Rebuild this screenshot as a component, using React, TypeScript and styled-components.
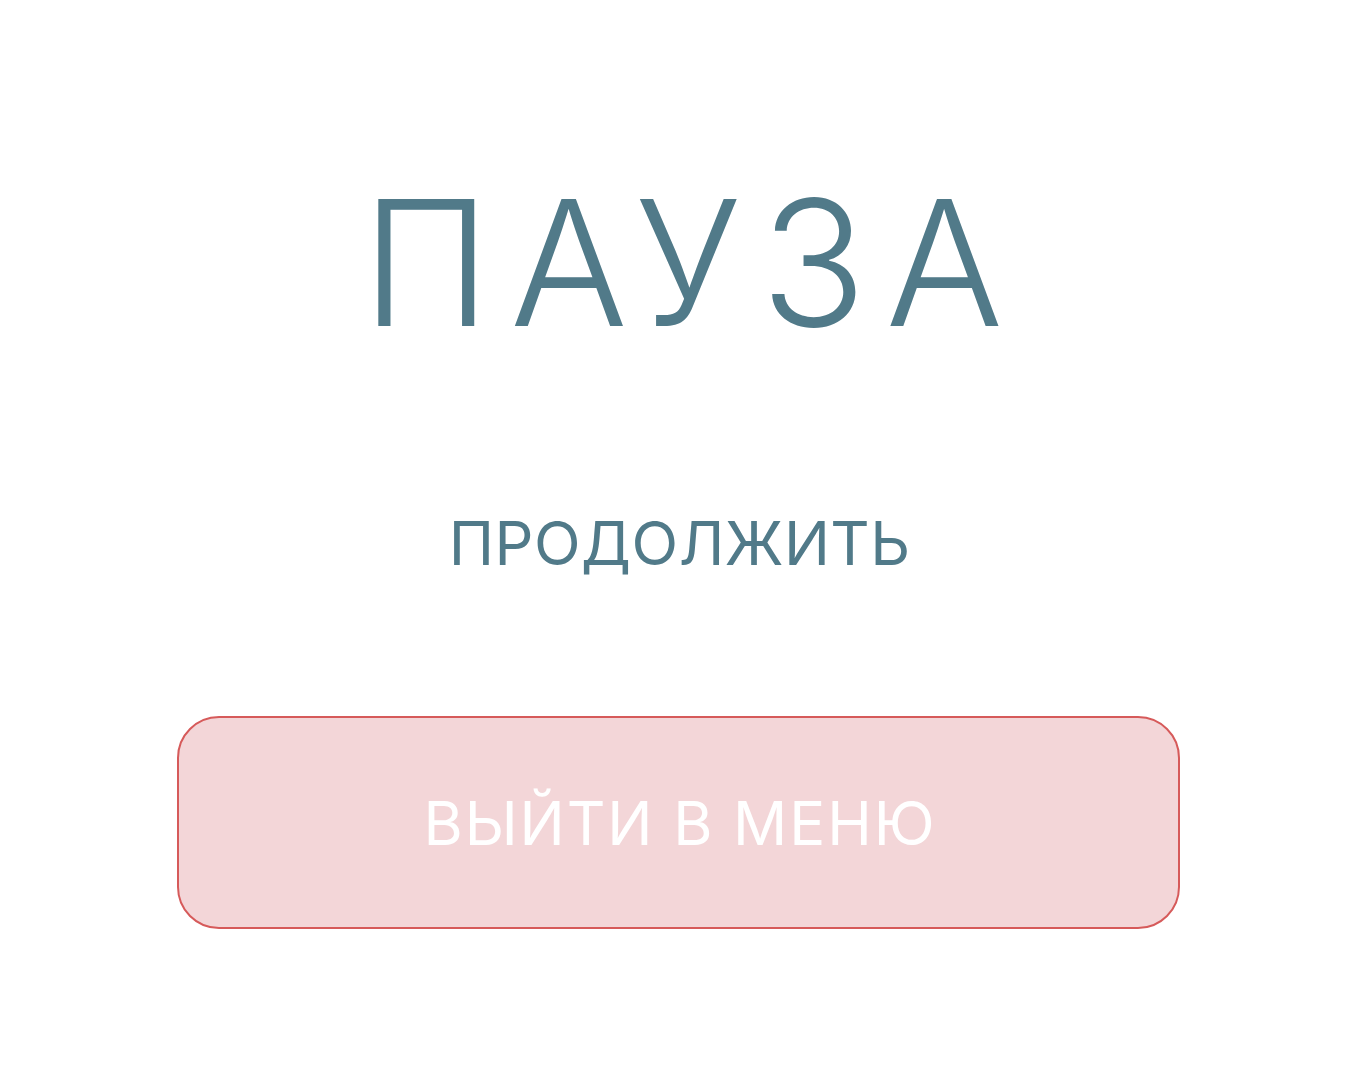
import React from 'react';
import styled, { createGlobalStyle } from 'styled-components';

const GlobalStyle = createGlobalStyle`
  html, body {
    margin: 0;
    padding: 0;
    background: #ffffff;
  }
  body {
    font-family: Inter, "Noto Sans", sans-serif;
  }
`;

const Screen = styled.div`
  display: flex;
  flex-direction: column;
  align-items: center;
  min-height: 1091px;
  padding-top: 175px;
  box-sizing: border-box;
`;

const Title = styled.h1`
  margin: 0;
  padding-left: 25px;
  font-size: 175px;
  font-weight: 300;
  line-height: 1;
  letter-spacing: 19px;
  color: #517a89;
`;

const ResumeButton = styled.button`
  margin-top: 163px;
  border: none;
  background: none;
  padding: 0;
  font-family: inherit;
  font-size: 61px;
  font-weight: 400;
  line-height: 1;
  letter-spacing: 0.5px;
  color: #517a89;
  cursor: pointer;
`;

const MenuButton = styled.button`
  margin-top: 142px;
  margin-right: 3px;
  width: 1003px;
  height: 213px;
  padding: 0 0 0 4px;
  box-sizing: border-box;
  border: 2px solid #d65a5a;
  border-radius: 42px;
  background: #f3d6d8;
  font-family: inherit;
  font-size: 60px;
  font-weight: 400;
  letter-spacing: 1.9px;
  color: #ffffff;
  cursor: pointer;
`;

export default function App() {
  return (
    <>
      <GlobalStyle />
      <Screen>
        <Title>ПАУЗА</Title>
        <ResumeButton>ПРОДОЛЖИТЬ</ResumeButton>
        <MenuButton>ВЫЙТИ В МЕНЮ</MenuButton>
      </Screen>
    </>
  );
}
